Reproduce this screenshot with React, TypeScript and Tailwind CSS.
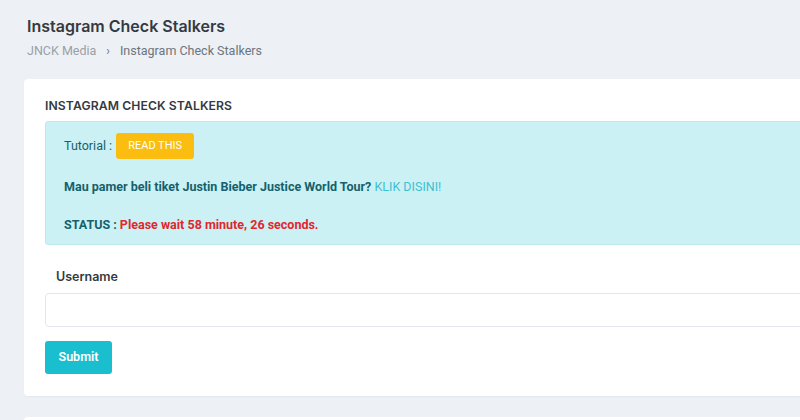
import React from "react";

export default function App() {
  return (
    <div className="min-h-[420px] w-[800px] overflow-hidden bg-[#edf0f5]" style={{ fontFamily: "Inter, 'Noto Sans', sans-serif" }}>
      <div className="pl-[27px] pt-[15px]">
        <h1 className="text-[16px] leading-[22px] font-semibold text-[#343a40]">Instagram Check Stalkers</h1>
        <div className="mt-[6px] flex items-center text-[12.5px] leading-[16px]" style={{ fontFamily: "Roboto, sans-serif" }}>
          <span className="text-[#9aa0a6]">JNCK Media</span>
          <span className="mx-[10px] text-[#6c757d] text-[12px]">›</span>
          <span className="text-[#6c757d]">Instagram Check Stalkers</span>
        </div>
      </div>
      <div className="ml-[24px] mt-[20px] w-[800px] rounded-[4px] bg-white pl-[21px] pt-[19px] pb-[22px] shadow-[0_1px_2px_rgba(0,0,0,0.04)]">
        <h2 className="text-[12.2px] leading-[16px] font-semibold uppercase text-[#343a40] tracking-[0.1px]">Instagram Check Stalkers</h2>
        <div className="mt-[7px] h-[124px] rounded-[3px] border border-[#bfe9ee] bg-[#cbf1f5] pl-[18px] pt-[11px] text-[12.5px] text-[#15616b]" style={{ fontFamily: "Roboto, sans-serif" }}>
          <div className="flex items-center">
            <span className="mr-[4px]">Tutorial :</span>
            <span className="inline-flex h-[26px] w-[78px] items-center justify-center rounded-[3px] bg-[#fbbd10] text-[11px] text-white">READ THIS</span>
          </div>
          <div className="mt-[20px] leading-[16px]">
            <span className="font-bold">Mau pamer beli tiket Justin Bieber Justice World Tour?</span>{" "}
            <span className="text-[#3fbfcf]">KLIK DISINI!</span>
          </div>
          <div className="mt-[22px] leading-[16px]">
            <span className="font-bold">STATUS : </span>
            <span className="font-bold text-[#e1262d]">Please wait 58 minute, 26 seconds.</span>
          </div>
        </div>
        <div className="mt-[24px] pl-[11px] text-[12.5px] leading-[16px] font-semibold text-[#343a40]">Username</div>
        <div className="mt-[8px] h-[34px] rounded-[4px] border border-[#e3e6ea] bg-white"></div>
        <button className="mt-[14px] h-[33px] w-[67px] rounded-[3px] bg-[#19bfcf] text-[12.5px] font-semibold text-white" style={{ fontFamily: "Roboto, sans-serif" }}>Submit</button>
      </div>
      <div className="ml-[24px] mt-[21px] h-[20px] w-[800px] rounded-[4px] bg-white"></div>
    </div>
  );
}
